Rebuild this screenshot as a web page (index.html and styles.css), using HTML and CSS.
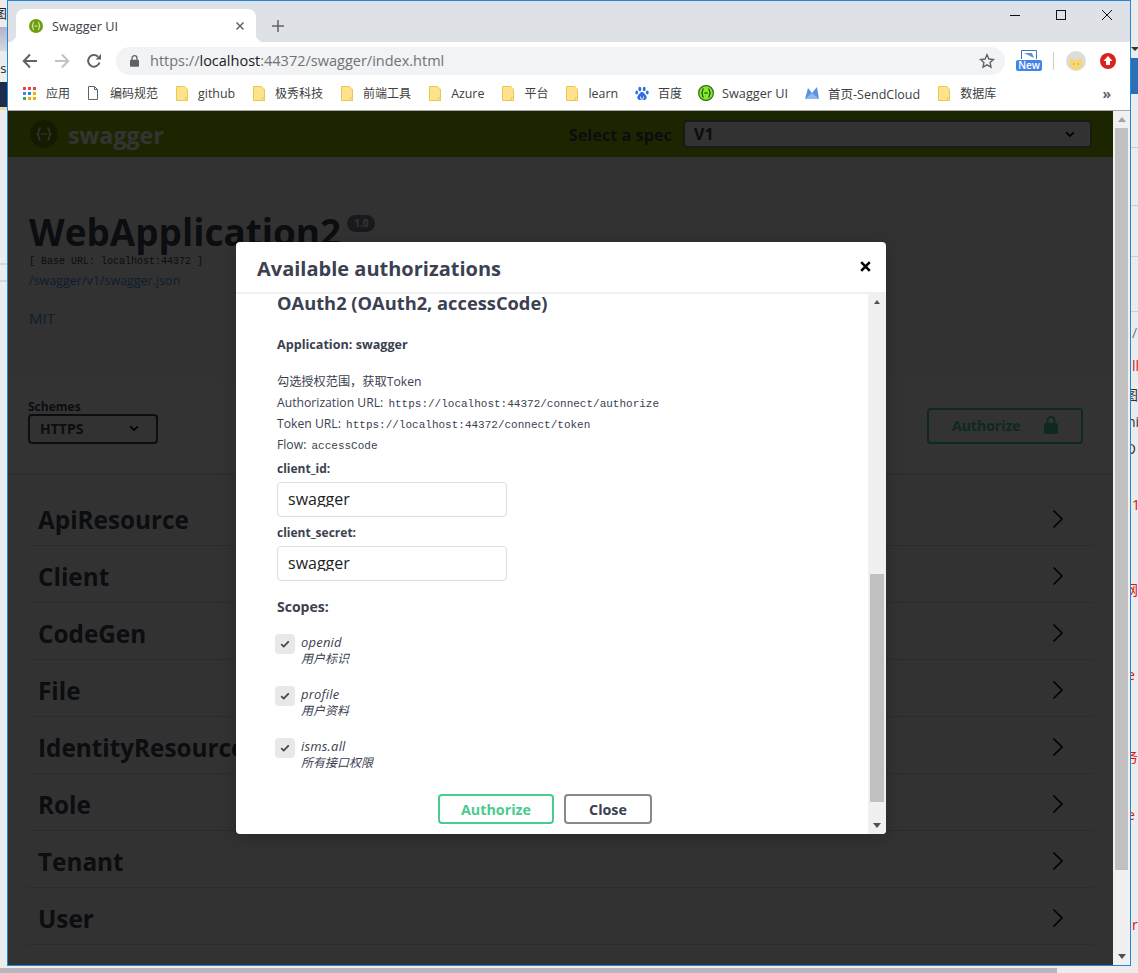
FILE: index.html
```html
<!DOCTYPE html>
<html lang="zh-CN">
<head>
<meta charset="utf-8">
<title>Swagger UI</title>
<link rel="stylesheet" href="styles.css">
</head>
<body>
<svg class="defs" width="0" height="0" aria-hidden="true">
  <defs>
    <symbol id="folder" viewBox="0 0 12 15">
      <path d="M.5.5h8.2l2.8 2.8v11.2H.5z" fill="#fee38f" stroke="#edc64e"/>
      <path d="M9.5 11.5h2v3h-2z" fill="#fee38f" stroke="#edc64e" stroke-width=".8"/>
    </symbol>
    <symbol id="chev-right" viewBox="0 0 20 20">
      <path d="M5.500 1.500 14 10l-8.500 8.500" fill="none" stroke="#000" stroke-width="1.600"/>
    </symbol>
    <symbol id="chev-down" viewBox="0 0 12 8">
      <path d="M1.500 1.500 6 6l4.500-4.500" fill="none" stroke="#000" stroke-width="2"/>
    </symbol>
    <symbol id="check" viewBox="0 0 12 10">
      <path d="M1.300 5.200 4.400 8.200 10.700 1.600" fill="none" stroke="#41444e" stroke-width="2.200"/>
    </symbol>
    <symbol id="swag" viewBox="0 0 16 16">
      <circle cx="8" cy="8" r="7.400" fill="#85ea2d" stroke="#2f6b12" stroke-width="1.200"/>
      <path d="M5.600 3.600C4 4 4.800 7.400 3.800 8c1 .6.2 4 1.800 4.400M10.400 3.600C12 4 11.200 7.400 12.200 8c-1 .6-.2 4-1.800 4.400" fill="none" stroke="#1f4d0c" stroke-width="1.200"/>
      <path d="M6.300 8h3.400" stroke="#1f4d0c" stroke-width="1.200"/>
    </symbol>
  </defs>
</svg>

<div class="backdrop">
  <div class="left-strip">
    <span class="lf lf-a">图</span>
    <div class="lf-band"></div>
    <span class="lf lf-b">es</span>
    <div class="lf-navy"></div>
    <div class="lf-line lf-line-a"></div>
    <div class="lf-line lf-line-b"></div>
  </div>
  <div class="right-strip">
    <div class="rt-arrow"></div>
    <div class="rt-blue"></div>
    <div class="rt-line rt-l1"></div>
    <div class="rt-line rt-l2"></div>
    <div class="rt-line rt-l3"></div>
    <div class="rt-line rt-l4"></div>
    <span class="frag fr-a">/</span>
    <span class="frag red fr-b">ll</span>
    <span class="frag fr-c">图</span>
    <span class="frag fr-d">ni</span>
    <span class="frag fr-e">O</span>
    <span class="frag red fr-f">18</span>
    <span class="frag red fr-g">网</span>
    <span class="frag red fr-h">e</span>
    <span class="frag red fr-i">务</span>
    <span class="frag red fr-j">e</span>
    <span class="frag red fr-k">r</span>
  </div>
  <div class="bottom-strip"><div class="bottom-thumb"></div></div>
</div>

<div class="window">
  <div class="tabstrip">
    <div class="tab">
      <svg class="favicon" width="14" height="14" viewBox="0 0 16 16"><circle cx="8" cy="8" r="8" fill="#6f9e0c"/><path d="M5.600 3.600C4 4 4.800 7.400 3.800 8c1 .6.2 4 1.800 4.400M10.400 3.600C12 4 11.200 7.400 12.200 8c-1 .6-.2 4-1.800 4.400M6.300 8h3.400" fill="none" stroke="#e4efc4" stroke-width="1.200"/></svg>
      <span class="tab-title">Swagger UI</span>
      <svg class="tab-close" width="10" height="10" viewBox="0 0 10 10"><path d="M1.500 1.500l7 7M8.500 1.500l-7 7" stroke="#5f6368" stroke-width="1.500"/></svg>
    </div>
    <svg class="newtab" width="12" height="12" viewBox="0 0 12 12"><path d="M6 0v12M0 6h12" stroke="#5f6368" stroke-width="1.500"/></svg>
    <div class="winctl">
      <svg width="12" height="12" viewBox="0 0 12 12"><path d="M1 6.500h10" stroke="#111"/></svg>
      <svg width="12" height="12" viewBox="0 0 12 12"><rect x="1.500" y="1.500" width="9" height="9" fill="none" stroke="#111"/></svg>
      <svg width="12" height="12" viewBox="0 0 12 12"><path d="M1 1l10 10M11 1L1 11" stroke="#111"/></svg>
    </div>
  </div>

  <div class="toolbar">
    <div class="navbtn"><svg width="16" height="16" viewBox="0 0 16 16"><path d="M15 8H2M8 1.500 1.800 8 8 14.500" fill="none" stroke="#5f6368" stroke-width="2"/></svg></div>
    <div class="navbtn"><svg width="16" height="16" viewBox="0 0 16 16"><path d="M1 8h13M8 1.500 14.200 8 8 14.500" fill="none" stroke="#c0c2c5" stroke-width="2"/></svg></div>
    <div class="navbtn"><svg width="16" height="16" viewBox="0 0 16 16"><path d="M13.500 9.500A5.800 5.800 0 1 1 12 3.700" fill="none" stroke="#5f6368" stroke-width="2"/><path d="M9.500 6.500H15V1z" fill="#5f6368"/></svg></div>
    <div class="omnibox">
      <svg class="lock" width="9" height="12" viewBox="0 0 9 12"><path d="M2 5V3.200a2.500 2.500 0 0 1 5 0V5" fill="none" stroke="#5f6368" stroke-width="1.300"/><rect y="4.800" width="9" height="7" rx="1" fill="#5f6368"/></svg>
      <span class="url"><span class="url-dim">https://</span>localhost<span class="url-dim">:44372/swagger/index.html</span></span>
      <svg class="star" width="16" height="16" viewBox="0 0 16 16"><path d="M8 1.800l1.900 4.200 4.600.5-3.400 3.100.9 4.500L8 11.800l-4 2.300.9-4.500L1.500 6.500 6.100 6z" fill="none" stroke="#5f6368" stroke-width="1.400"/></svg>
    </div>
    <div class="ext-new">
      <svg class="ext-top" width="16" height="10" viewBox="0 0 16 10"><path d="M.5 9V.5h15V9" fill="none" stroke="#3b78b8"/><path d="M3 3h8l2 5-6-3z" fill="#5b93cf"/></svg>
      <span class="ext-badge">New</span>
    </div>
    <div class="tool-sep"></div>
    <svg class="avatar" width="20" height="24" viewBox="0 0 20 24"><circle cx="10" cy="12" r="10" fill="#dcdcdc"/><path d="M3.500 13l.5-5 3.500 3h5L16 8l.5 5c0 5-2.500 8-6.500 8s-6.500-3-6.500-8z" fill="#f7d774"/><path d="M7 15h1.500M11.500 15H13" stroke="#b89a3a"/></svg>
    <svg class="redup" width="16" height="16" viewBox="0 0 16 16"><circle cx="8" cy="8" r="8" fill="#d9231f"/><path d="M8 3l4.500 5H10v4H6V8H3.500z" fill="#fff"/></svg>
  </div>

  <div class="bookmarks">
    <div class="bm bm-apps">
      <span class="apps-grid"><i class="c-r"></i><i class="c-r"></i><i class="c-r"></i><i class="c-b"></i><i class="c-b2"></i><i class="c-y"></i><i class="c-g"></i><i class="c-y"></i><i class="c-y"></i></span>
      <span>应用</span>
    </div>
    <div class="bm bm-doc"><svg width="10" height="14" viewBox="0 0 10 14"><path d="M.5.500h6l3 3v10H.500zM6.500.500v3h3" fill="#fff" stroke="#5f6368"/></svg><span>编码规范</span></div>
    <div class="bm"><svg width="12" height="15"><use href="#folder"/></svg><span class="bm-latin">github</span></div>
    <div class="bm"><svg width="12" height="15"><use href="#folder"/></svg><span>极秀科技</span></div>
    <div class="bm"><svg width="12" height="15"><use href="#folder"/></svg><span>前端工具</span></div>
    <div class="bm"><svg width="12" height="15"><use href="#folder"/></svg><span class="bm-latin">Azure</span></div>
    <div class="bm"><svg width="12" height="15"><use href="#folder"/></svg><span>平台</span></div>
    <div class="bm"><svg width="12" height="15"><use href="#folder"/></svg><span class="bm-latin">learn</span></div>
    <div class="bm bm-tight bm-baidu"><svg width="14" height="15" viewBox="0 0 14 15"><g fill="#2f6fe4"><ellipse cx="4.800" cy="3" rx="1.500" ry="2.300"/><ellipse cx="9.200" cy="3" rx="1.500" ry="2.300"/><ellipse cx="1.700" cy="6.500" rx="1.400" ry="2"/><ellipse cx="12.300" cy="6.500" rx="1.400" ry="2"/><path d="M7 6c2 0 2.500 2 4 3.500 1.500 1.800.500 4.500-2 4.500-1 0-1.500-.4-2-.4s-1 .4-2 .4c-2.500 0-3.500-2.700-2-4.500C4.500 8 5 6 7 6z"/></g><path d="M5.500 10.500v1.800c0 .8 3 .8 3 0v-1.800" fill="none" stroke="#fff" stroke-width=".8"/></svg><span>百度</span></div>
    <div class="bm bm-swag"><svg width="16" height="16"><use href="#swag"/></svg><span class="bm-swag-text">Swagger UI</span></div>
    <div class="bm bm-tight bm-send"><svg width="14" height="12" viewBox="0 0 14 12"><path d="M0 12 3 1l4 5 5-6 2 12z" fill="#5b93e0"/><path d="M0 12 7 6l7 6z" fill="#8fb8ec"/></svg><span class="bm-mixed">首页-SendCloud</span></div>
    <div class="bm"><svg width="12" height="15"><use href="#folder"/></svg><span>数据库</span></div>
    <span class="bm-more">»</span>
  </div>

  <div class="viewport">
    <div class="page">
      <header class="topbar">
        <div class="logo">
          <svg width="28" height="28" viewBox="0 0 28 28"><circle cx="14" cy="14" r="14" fill="#628a00"/><path d="M10.500 8C8 8.300 9.500 13 7.500 14c2 1 .5 5.700 3 6M17.500 8c2.500.3 1 5 3 6-2 1-.5 5.700-3 6" fill="none" stroke="#fff" stroke-width="1.600"/><path d="M11 14h1.500M13.300 14h1.500M15.600 14h1.500" stroke="#fff" stroke-width="1.600"/></svg>
          <span class="logo-text">swagger</span>
        </div>
        <div class="spec">
          <span class="spec-label">Select a spec</span>
          <div class="spec-select"><span>V1</span><svg width="10" height="7"><use href="#chev-down"/></svg></div>
        </div>
      </header>

      <section class="info">
        <div class="title-line">
          <h1 class="title">WebApplication2</h1>
          <span class="version">1.0</span>
        </div>
        <div class="base-url">[ Base URL: localhost:44372 ]</div>
        <div class="spec-link">/swagger/v1/swagger.json</div>
        <div class="license">MIT</div>
      </section>

      <section class="schemes">
        <div class="schemes-col">
          <span class="schemes-label">Schemes</span>
          <div class="schemes-select"><span>HTTPS</span><svg width="10" height="7"><use href="#chev-down"/></svg></div>
        </div>
        <div class="authorize-btn">
          <span>Authorize</span>
          <svg width="14" height="18" viewBox="0 0 14 18"><path d="M3.500 8V4.500a3.500 3.500 0 0 1 7 0V8" fill="none" stroke="#49cc90" stroke-width="2"/><rect y="7" width="14" height="11" rx="2" fill="#49cc90"/></svg>
        </div>
      </section>

      <section class="tags">
        <div class="tag-row"><span>ApiResource</span><svg width="20" height="20"><use href="#chev-right"/></svg></div>
        <div class="tag-row"><span>Client</span><svg width="20" height="20"><use href="#chev-right"/></svg></div>
        <div class="tag-row"><span>CodeGen</span><svg width="20" height="20"><use href="#chev-right"/></svg></div>
        <div class="tag-row"><span>File</span><svg width="20" height="20"><use href="#chev-right"/></svg></div>
        <div class="tag-row"><span>IdentityResource</span><svg width="20" height="20"><use href="#chev-right"/></svg></div>
        <div class="tag-row"><span>Role</span><svg width="20" height="20"><use href="#chev-right"/></svg></div>
        <div class="tag-row"><span>Tenant</span><svg width="20" height="20"><use href="#chev-right"/></svg></div>
        <div class="tag-row"><span>User</span><svg width="20" height="20"><use href="#chev-right"/></svg></div>
      </section>

      <div class="overlay"></div>

      <div class="modal">
        <div class="modal-head">
          <h3 class="modal-title">Available authorizations</h3>
          <svg class="modal-x" width="11" height="11" viewBox="0 0 11 11"><path d="M1.200 1.200l8.600 8.600M9.800 1.200l-8.600 8.600" stroke="#000" stroke-width="2.600"/></svg>
        </div>
        <div class="modal-body">
          <div class="modal-content">
            <h4 class="auth-name">OAuth2 (OAuth2, accessCode)</h4>
            <p class="app-name">Application: swagger</p>
            <div class="auth-desc">
              <p>勾选授权范围，获取Token</p>
              <p>Authorization URL: <code>https://localhost:44372/connect/authorize</code></p>
              <p>Token URL: <code>https://localhost:44372/connect/token</code></p>
              <p>Flow: <code>accessCode</code></p>
            </div>
            <label class="field-label first">client_id:</label>
            <div class="field"><span class="field-text">swagger</span></div>
            <label class="field-label second">client_secret:</label>
            <div class="field field-second"><span class="field-text">swagger</span></div>
            <h5 class="scopes-title">Scopes:</h5>
            <div class="scope">
              <span class="checkbox"><svg width="10" height="8"><use href="#check"/></svg></span>
              <div class="scope-text"><span class="scope-name">openid</span><span>用户标识</span></div>
            </div>
            <div class="scope">
              <span class="checkbox"><svg width="10" height="8"><use href="#check"/></svg></span>
              <div class="scope-text"><span class="scope-name">profile</span><span>用户资料</span></div>
            </div>
            <div class="scope">
              <span class="checkbox"><svg width="10" height="8"><use href="#check"/></svg></span>
              <div class="scope-text"><span class="scope-name">isms.all</span><span>所有接口权限</span></div>
            </div>
            <div class="modal-actions">
              <button class="btn btn-auth" type="button">Authorize</button>
              <button class="btn btn-close" type="button">Close</button>
            </div>
          </div>
          <div class="sb sb-modal">
            <span class="sb-btn sb-up-dark"></span>
            <div class="sb-track"><div class="sb-thumb"></div></div>
            <span class="sb-btn sb-down"></span>
          </div>
        </div>
      </div>
    </div>
    <div class="sb sb-page">
      <span class="sb-btn sb-up"></span>
      <div class="sb-track"><div class="sb-thumb"></div></div>
      <span class="sb-btn sb-down"></span>
    </div>
  </div>
</div>
</body>
</html>
```

FILE: styles.css
```css
* { box-sizing: border-box; }
html, body { margin: 0; padding: 0; height: 100%; overflow: hidden; }
body {
  position: relative;
  width: 1138px;
  height: 973px;
  background: #e9e9e9;
  font-family: "Open Sans", "Noto Sans CJK SC", sans-serif;
  color: #3b4151;
}
h1, h3, h4, h5, p { margin: 0; }
.defs { position: absolute; }

/* what is behind the browser window */
.backdrop { position: absolute; inset: 0; overflow: hidden; }
.left-strip { position: absolute; left: 0; top: 0; width: 7px; height: 966px; background: #ececec; }
.lf { position: absolute; font-size: 13px; color: #222; line-height: 14px; }
.lf-a { left: -6px; top: 6px; }
.lf-b { left: -7px; top: 61px; }
.lf-band { position: absolute; left: 0; top: 27px; width: 7px; height: 24px; background: linear-gradient(#aeb4c6, #d5d8e2); }
.lf-navy { position: absolute; left: 0; top: 82px; width: 7px; height: 28px; background: #1d2c4a; border-bottom: 3px solid #e6dc9c; }
.lf-line { position: absolute; left: 0; width: 7px; height: 2px; background: #d6d6dc; }
.lf-line-a { top: 263px; }
.lf-line-b { top: 280px; }

.right-strip { position: absolute; left: 1131px; top: 0; width: 7px; height: 966px; background: #ececec; }
.rt-arrow { position: absolute; left: 0; top: 47px; border-left: 4px solid transparent; border-right: 4px solid transparent; border-top: 4px solid #333; }
.rt-blue { position: absolute; left: 0; top: 58px; width: 7px; height: 42px; background: linear-gradient(#2d6fb5 85%, #e8eef6 85%); }
.rt-line { position: absolute; left: 0; width: 7px; height: 1px; background: #cfcfcf; }
.rt-l1 { top: 147px; }
.rt-l2 { top: 205px; }
.rt-l3 { top: 256px; }
.rt-l4 { top: 311px; }
.frag { position: absolute; font-size: 14px; line-height: 16px; color: #333; }
.frag.red { color: #e01010; }
.fr-a { left: 1px; top: 325px; color: #777; }
.fr-b { left: 1px; top: 358px; }
.fr-c { left: -7px; top: 387px; }
.fr-d { left: -4px; top: 414px; }
.fr-e { left: -6px; top: 441px; }
.fr-f { left: 1px; top: 497px; }
.fr-g { left: -7px; top: 582px; }
.fr-h { left: -4px; top: 667px; }
.fr-i { left: -7px; top: 749px; }
.fr-j { left: -4px; top: 807px; }
.fr-k { left: 1px; top: 917px; }

.bottom-strip { position: absolute; left: 0; top: 966px; width: 1138px; height: 7px; background: #ececec; padding-top: 2px; }
.bottom-thumb { width: 1057px; height: 5px; background: #b6b6bc; }

/* browser window */
.window {
  position: absolute;
  left: 7px;
  top: 0;
  width: 1124px;
  height: 966px;
  border: 1px solid #1e88dc;
  display: flex;
  flex-direction: column;
  background: #fff;
}
.tabstrip { height: 41px; background: #dee1e6; display: flex; align-items: flex-end; padding-left: 8px; flex: none; }
.tab {
  position: relative;
  width: 240px;
  height: 33px;
  background: #fff;
  border-radius: 8px 8px 0 0;
  display: flex;
  align-items: center;
  padding: 0 0 0 13px;
}
.tab::before, .tab::after { content: ""; position: absolute; bottom: 0; width: 8px; height: 8px; }
.tab::before { left: -8px; background: radial-gradient(circle at 0 0, #dee1e6 8px, #fff 8.5px); }
.tab::after { right: -8px; background: radial-gradient(circle at 100% 0, #dee1e6 8px, #fff 8.5px); }
.tab-title { margin-left: 9px; font-size: 12.7px; color: #3c4043; }
.tab-close { margin-left: auto; margin-right: 11px; }
.newtab { margin: 0 0 10px 16px; }
.winctl { margin-left: auto; display: flex; gap: 34px; padding-right: 17px; align-self: flex-start; padding-top: 8px; }

.toolbar { height: 37px; display: flex; align-items: center; padding: 0 0 0 6px; background: #fff; flex: none; }
.navbtn { width: 32px; display: flex; justify-content: center; }
.omnibox {
  margin-left: 6px;
  width: 889px;
  height: 28px;
  border-radius: 14px;
  background: #f1f3f4;
  display: flex;
  align-items: center;
  padding: 0 10px 0 14px;
}
.lock { flex: none; }
.url { margin-left: 11px; font-size: 14.5px; color: #202124; }
.url-dim { color: #6f7378; }
.star { margin-left: auto; }
.ext-new { margin-left: 11px; width: 26px; display: flex; flex-direction: column; align-items: center; }
.ext-badge { background: #4285e8; color: #fff; font-size: 10px; font-weight: 600; line-height: 11px; width: 26px; text-align: center; border-radius: 2px; }
.ext-top { display: block; }
.tool-sep { width: 1px; height: 18px; background: #ccc; margin-left: 11px; }
.avatar { margin-left: 12px; }
.redup { margin-left: 14px; }

.bookmarks {
  height: 32px;
  flex: none;
  display: flex;
  align-items: center;
  padding: 0 0 3px 15px;
  border-bottom: 1px solid #a8a8a8;
  font-size: 12px;
  color: #3c4043;
  gap: 18px;
}
.bm { display: flex; align-items: center; gap: 10px; white-space: nowrap; }
.bm-doc { gap: 12px; }
.bm-tight { gap: 9px; }
.bm-baidu { margin-left: -1px; }
.bm-swag { gap: 8px; margin-left: -2px; }
.bm-send { margin-left: -1px; }
.bm-latin { font-size: 12.4px; }
.bm-swag-text { font-size: 12.7px; }
.bm-mixed { font-size: 12.5px; }
.apps-grid { display: grid; grid-template-columns: repeat(3, 3px); gap: 2px; width: 13px; }
.apps-grid i { width: 3px; height: 3px; display: block; }
.c-r { background: #e8453c; }
.c-b { background: #4285f4; }
.c-b2 { background: #1e88e5; }
.c-y { background: #f9ab00; }
.c-g { background: #34a853; }
.bm-more { margin-left: auto; margin-right: 19px; font-size: 14px; color: #5f6368; font-weight: 700; }

.viewport { flex: 1; display: flex; min-height: 0; }
.page { position: relative; width: 1105px; background: #fafafa; overflow: hidden; }

.topbar { height: 46px; background: #89bf04; display: flex; align-items: center; justify-content: space-between; padding: 0 21px 0 22px; }
.logo { display: flex; align-items: center; gap: 10px; }
.logo-text { font-size: 23.2px; font-weight: 700; color: #fff; padding-top: 2px; }
.spec { display: flex; align-items: center; gap: 11px; }
.spec-label { font-size: 16.300px; font-weight: 700; color: #3b4151; padding-top: 2px; }
.spec-select {
  width: 409px;
  height: 28px;
  background: #f7f7f7;
  border: 2px solid #788264;
  border-radius: 4px;
  display: flex;
  align-items: center;
  justify-content: space-between;
  padding: 0 15px 0 9px;
  font-size: 16px;
  font-weight: 700;
  color: #3b4151;
}

.info { padding: 49px 20px 52px 20px; }
.title-line { display: flex; align-items: flex-start; height: 48px; margin-left: 1px; }
.title { font-size: 36.900px; line-height: 48px; padding-top: 2px; font-weight: 700; color: #3b4151; }
.version { margin: 9px 0 0 6px; height: 17px; padding: 0 7px; border-radius: 9px; background: #7d8492; color: #fff; font-size: 10px; font-weight: 700; line-height: 17px; }
.base-url { margin-top: 1px; margin-left: 1px; font-family: "Liberation Mono", monospace; font-size: 10px; line-height: 13px; }
.spec-link { margin-top: 5px; margin-left: 1px; font-size: 12.500px; line-height: 16px; color: #4990e2; }
.license { margin-top: 21px; margin-left: 1px; font-size: 15px; line-height: 16px; color: #4990e2; }

.schemes {
  height: 95px;
  background: #fff;
  box-shadow: 0 1px 2px rgba(0, 0, 0, .15);
  display: flex;
  align-items: flex-end;
  justify-content: space-between;
  padding: 0 30px 29px 20px;
}
.schemes-col { display: flex; flex-direction: column; }
.schemes-label { font-size: 12px; font-weight: 700; line-height: 14px; }
.schemes-select {
  width: 130px;
  height: 30px;
  border: 2px solid #41444e;
  border-radius: 4px;
  display: flex;
  align-items: center;
  justify-content: space-between;
  padding: 0 17px 2px 10px;
  font-size: 14px;
  font-weight: 700;
  background: #f7f7f7;
}
.authorize-btn {
  width: 156px;
  height: 36px;
  border: 2px solid #49cc90;
  border-radius: 4px;
  display: flex;
  align-items: center;
  justify-content: space-between;
  padding: 0 23px 2px;
  font-size: 14px;
  font-weight: 700;
  color: #49cc90;
}

.tags { padding: 16px 20px 0; }
.tag-row {
  height: 57px;
  border-bottom: 1px solid #d8dade;
  display: flex;
  align-items: center;
  justify-content: space-between;
  padding: 4px 25px 0 10px;
  font-size: 24.300px;
  font-weight: 700;
}

.overlay { position: absolute; inset: 0; background: rgba(0, 0, 0, .8); }

.modal {
  position: absolute;
  left: 228px;
  top: 131px;
  width: 650px;
  height: 592px;
  background: #fff;
  border-radius: 4px;
  box-shadow: 0 4px 18px rgba(0, 0, 0, .2);
  display: flex;
  flex-direction: column;
  overflow: hidden;
}
.modal-head {
  height: 52px;
  flex: none;
  border-bottom: 2px solid #f0f0f0;
  display: flex;
  align-items: center;
  justify-content: space-between;
  padding: 0 15px 0 21px;
}
.modal-title { font-size: 20px; font-weight: 700; line-height: 26px; margin-top: 4px; color: #3b4151; }
.modal-x { margin-bottom: 2px; }
.modal-body { flex: 1; display: flex; min-height: 0; }
.modal-content { flex: 1; min-width: 0; padding: 0 0 0 41px; }

.auth-name { font-size: 18.300px; line-height: 20px; font-weight: 700; margin-top: -1px; margin-bottom: 1px; }
.app-name { margin-top: 24px; font-size: 12.600px; line-height: 16px; font-weight: 700; }
.auth-desc { margin-top: 18px; font-size: 12.200px; line-height: 21px; }
code { font-family: "Liberation Mono", monospace; font-size: 11px; line-height: 1; margin-left: 2px; }
.field-label { display: block; font-size: 12px; line-height: 16px; font-weight: 700; }
.first { margin-top: 6px; }
.second { margin-top: 8px; }
.field {
  margin-top: 5px;
  width: 230px;
  height: 35px;
  border: 1px solid #dedede;
  border-radius: 4px;
  padding: 7px 10px 0;
  background: #fff;
  color: #222;
  font-size: 16px;
}
.field-second { margin-top: 5px; }
.field-text { display: block; height: 17px; line-height: 18px; overflow: hidden; }
.scopes-title { margin-top: 17px; font-size: 14px; line-height: 18px; font-weight: 700; }
.scope { display: flex; height: 52px; margin-left: -2px; }
.scopes-title + .scope { margin-top: 18px; }
.checkbox { width: 20px; height: 20px; border-radius: 4px; background: #e8e8e8; display: flex; align-items: center; justify-content: center; flex: none; }
.scope-text { margin-left: 6px; display: flex; flex-direction: column; font-size: 12px; line-height: 16px; font-style: italic; }
.scope-name { font-size: 13px; letter-spacing: .2px; line-height: 17px; }
.modal-actions { margin-top: 4px; padding-left: 161px; display: flex; gap: 10px; }
.btn {
  height: 30px;
  border-radius: 4px;
  background: #fff;
  font-family: inherit;
  font-size: 14.300px;
  font-weight: 700;
  padding: 0;
}
.btn-auth { width: 116px; border: 2px solid #49cc90; color: #49cc90; }
.btn-close { width: 88px; border: 2px solid #888; color: #3b4151; }

/* scrollbars */
.sb { flex: none; display: flex; flex-direction: column; background: #f0f0f0; }
.sb-page { width: 17px; padding: 0 2px; }
.sb-modal { width: 18px; padding: 0 2px; }
.sb-btn { height: 17px; flex: none; position: relative; }
.sb-btn::after { content: ""; position: absolute; left: 50%; top: 6px; margin-left: -4px; border-left: 4px solid transparent; border-right: 4px solid transparent; }
.sb-up::after { border-bottom: 5px solid #a3a3a3; }
.sb-up-dark::after { border-bottom: 4px solid #505050; margin-left: -3px; border-left-width: 3px; border-right-width: 3px; }
.sb-down::after { border-top: 5px solid #505050; }
.sb-track { flex: 1; }
.sb-thumb { background: #c0c0c0; height: 100%; }
.sb-page .sb-thumb { height: 742px; }
.sb-modal .sb-thumb { margin-top: 263px; height: 228px; }
```
